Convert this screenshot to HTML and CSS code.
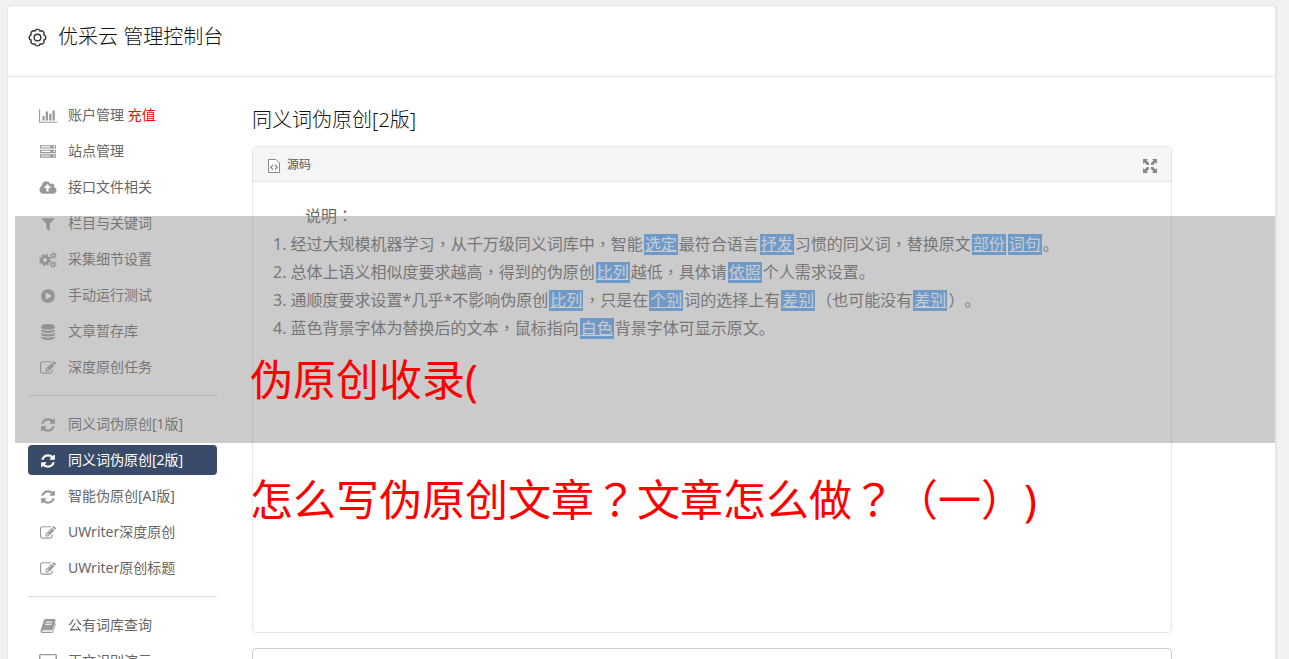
FILE: index.html
```
<!DOCTYPE html>
<html>
<head>
  <meta charset="UTF-8">
  <meta name="viewport" content="width=device-width, initial-scale=1.0">
  <title>优采云 管理控制台</title>
  <link rel="stylesheet" href="styles.css">
</head>
<body>
  <!-- 图标 -->
  <svg class="sprite" aria-hidden="true">
    <symbol id="i-chart" viewBox="0 0 2048 1792"><path d="M640 896v512h-256v-512h256zm384-512v1024h-256v-1024h256zm1024 1152v128h-2048v-1536h128v1408h1920zm-640-896v768h-256v-768h256zm384-384v1152h-256v-1152h256z"/></symbol>
    <symbol id="i-server" viewBox="0 0 1792 1792"><path d="M128 1408h1024v-128h-1024v128zm0-512h1024v-128h-1024v128zm1568 448q0-40-28-68t-68-28-68 28-28 68 28 68 68 28 68-28 28-68zm-1568-960h1024v-128h-1024v128zm1568 448q0-40-28-68t-68-28-68 28-28 68 28 68 68 28 68-28 28-68zm0-512q0-40-28-68t-68-28-68 28-28 68 28 68 68 28 68-28 28-68zm96 832v384h-1792v-384h1792zm0-512v384h-1792v-384h1792zm0-512v384h-1792v-384h1792z"/></symbol>
    <symbol id="i-cloud" viewBox="-64 0 1920 1792"><path d="M1216 864q0-14-9-23l-352-352q-9-9-23-9t-23 9l-351 351q-10 12-10 24 0 14 9 23t23 9h224v352q0 13 9.500 22.500t22.500 9.500h192q13 0 22.500-9.500t9.500-22.500v-352h224q13 0 22.500-9.500t9.500-22.500zm640 288q0 159-112.500 271.500t-271.500 112.500h-1088q-185 0-316.500-131.500t-131.500-316.500q0-130 70-240t188-165q-2-30-2-43 0-212 150-362t362-150q156 0 285.500 87t188.500 231q71-62 166-62 106 0 181 75t75 181q0 76-41 138 130 31 213.500 135.500t83.500 238.500z"/></symbol>
    <symbol id="i-filter" viewBox="0 0 1792 1792"><path d="M1595 295q17 41-14 70l-493 493v742q0 42-39 59-13 5-25 5-27 0-45-19l-256-256q-19-19-19-45v-486l-493-493q-31-29-14-70 17-39 59-39h1280q42 0 59 39z"/></symbol>
    <symbol id="i-cogs" viewBox="0 0 18 16">
      <g fill="none" stroke="currentColor">
        <circle cx="6" cy="8" r="3.400" stroke-width="2.600"/>
        <circle cx="6" cy="8" r="5.100" stroke-width="1.800" stroke-dasharray="2.200 1.805"/>
        <circle cx="14.200" cy="3.600" r="1.700" stroke-width="1.300"/>
        <circle cx="14.200" cy="3.600" r="2.700" stroke-width="1.100" stroke-dasharray="1.500 1.327"/>
        <circle cx="14.200" cy="12.400" r="1.700" stroke-width="1.300"/>
        <circle cx="14.200" cy="12.400" r="2.700" stroke-width="1.100" stroke-dasharray="1.500 1.327"/>
      </g>
    </symbol>
    <symbol id="i-play" viewBox="0 0 1792 1792"><path d="M896 128q209 0 385.500 103t279.500 279.500 103 385.500-103 385.500-279.500 279.500-385.500 103-385.500-103-279.500-279.500-103-385.500 103-385.500 279.500-279.500 385.500-103zm384 823q32-18 32-55t-32-55l-544-320q-31-19-64-1-32 19-32 56v640q0 37 32 56 16 8 32 8 17 0 32-9z"/></symbol>
    <symbol id="i-database" viewBox="0 0 1792 1792"><path d="M896 768q237 0 443-43t325-127v170q0 69-103 128t-280 93.500-385 34.500-385-34.500-280-93.500-103-128v-170q119 84 325 127t443 43zm0 768q237 0 443-43t325-127v170q0 69-103 128t-280 93.500-385 34.500-385-34.500-280-93.500-103-128v-170q119 84 325 127t443 43zm0-384q237 0 443-43t325-127v170q0 69-103 128t-280 93.500-385 34.500-385-34.500-280-93.500-103-128v-170q119 84 325 127t443 43zm0-1152q208 0 385 34.500t280 93.500 103 128v128q0 69-103 128t-280 93.500-385 34.500-385-34.500-280-93.500-103-128v-128q0-69 103-128t280-93.500 385-34.500z"/></symbol>
    <symbol id="i-edit" viewBox="0 0 1792 1792"><path d="M888 1184l116-116-152-152-116 116v56h96v96h56zm440-720q-16-16-33 1l-350 350q-17 17-1 33t33-1l350-350q17-17 1-33zm80 594v190q0 119-84.500 203.500t-203.500 84.500h-832q-119 0-203.500-84.500t-84.500-203.500v-832q0-119 84.500-203.500t203.500-84.500h832q63 0 117 25 15 7 18 23 3 17-9 29l-49 49q-14 14-32 8-23-6-45-6h-832q-66 0-113 47t-47 113v832q0 66 47 113t113 47h832q66 0 113-47t47-113v-126q0-13 9-22l64-64q15-15 35-7t20 29zm-96-738l288 288-672 672h-288v-288zm444 132l-92 92-288-288 92-92q28-28 68-28t68 28l152 152q28 28 28 68t-28 68z"/></symbol>
    <symbol id="i-refresh" viewBox="0 0 1792 1792"><path d="M1639 1056q0 5-1 7-64 268-268 434.500t-478 166.500q-146 0-282.500-55t-243.500-157l-129 129q-19 19-45 19t-45-19-19-45v-448q0-26 19-45t45-19h448q26 0 45 19t19 45-19 45l-137 137q71 66 161 102t187 36q134 0 250-65t186-179q11-17 53-117 8-23 30-23h192q13 0 22.500 9.500t9.500 22.500zm25-800v448q0 26-19 45t-45 19h-448q-26 0-45-19t-19-45 19-45l138-138q-148-137-349-137-134 0-250 65t-186 179q-11 17-53 117-8 23-30 23h-199q-13 0-22.500-9.500t-9.500-22.500v-7q65-268 270-434.500t480-166.500q146 0 284 55.500t245 156.500l130-129q19-19 45-19t45 19 19 45z"/></symbol>
    <symbol id="i-book" viewBox="0 0 16 16"><path fill-rule="evenodd" d="M5.500 1h9q1.300.2 1 1.500l-2.600 8.700q-.3 1-1.300 1H3q-.8 0-1 .7.100.8 1 .8h8.800q.7 0 1-.8L15.300 5q.8.500.5 1.400l-2.500 7.300q-.4 1.300-1.600 1.300H2.600Q.6 14.800.5 13q0-.8.3-1.500L3.900 2.200Q4.300 1 5.500 1zM6 3.500l-.3 1h6.500l.3-1zm-.7 2.200-.3 1h6.500l.3-1z"/></symbol>
    <symbol id="i-desktop" viewBox="0 0 18 16"><path fill-rule="evenodd" d="M1.500 0h15Q18 0 18 1.500v10q0 1.500-1.500 1.500H11l.6 2H13v1H5v-1h1.400L7 13H1.500Q0 13 0 11.500v-10Q0 0 1.500 0zm0 1.300v8.700h15V1.300z"/></symbol>
    <symbol id="i-gear" viewBox="0 0 20 20">
      <g fill="none" stroke="currentColor" stroke-width="1.500">
        <path d="M3.300 7.200A2.900 2.900 0 0 1 7.200 3.300A2.900 2.900 0 0 1 12.800 3.300A2.900 2.900 0 0 1 16.700 7.200A2.900 2.900 0 0 1 16.700 12.800A2.900 2.900 0 0 1 12.800 16.700A2.900 2.900 0 0 1 7.200 16.700A2.900 2.900 0 0 1 3.300 12.800A2.900 2.900 0 0 1 3.300 7.200z"/>
        <circle cx="10" cy="10" r="3.500"/>
      </g>
    </symbol>
    <symbol id="i-source" viewBox="0 0 12 14">
      <path fill="#fff" stroke="currentColor" d="M.5.500h7.500l3.500 3.500v9.500H.5z"/>
      <path fill="none" stroke="currentColor" stroke-width="1.300" d="M5 6 2.800 8.300 5 10.600M7 6l2.200 2.300L7 10.600"/>
    </symbol>
    <symbol id="i-expand" viewBox="0 0 14 14"><path d="M0 0h5L3.600 1.400 6 3.900v2H4L1.400 3.500 0 5zM14 0H9l1.400 1.400L8 3.900v2h2l2.600-2.400L14 5zM0 14h5l-1.400-1.400L6 10.100v-2H4l-2.600 2.400L0 9zM14 14H9l1.400-1.400L8 10.100v-2h2l2.600 2.400L14 9z"/></symbol>
  </svg>

  <div class="console">
    <header class="console-header">
      <svg class="gear"><use href="#i-gear"/></svg>
      <h1>优采云 管理控制台</h1>
    </header>

    <div class="console-body">
      <nav class="sidebar">
        <a href="#"><svg><use href="#i-chart"/></svg><span>账户管理 <span class="recharge">充值</span></span></a>
        <a href="#"><svg><use href="#i-server"/></svg>站点管理</a>
        <a href="#"><svg><use href="#i-cloud"/></svg>接口文件相关</a>
        <a href="#"><svg><use href="#i-filter"/></svg>栏目与关键词</a>
        <a href="#"><svg><use href="#i-cogs"/></svg>采集细节设置</a>
        <a href="#"><svg><use href="#i-play"/></svg>手动运行测试</a>
        <a href="#"><svg><use href="#i-database"/></svg>文章暂存库</a>
        <a href="#"><svg><use href="#i-edit"/></svg>深度原创任务</a>
        <hr>
        <a href="#"><svg><use href="#i-refresh"/></svg>同义词伪原创[1版]</a>
        <a href="#" class="active"><svg><use href="#i-refresh"/></svg>同义词伪原创[2版]</a>
        <a href="#"><svg><use href="#i-refresh"/></svg>智能伪原创[AI版]</a>
        <a href="#"><svg><use href="#i-edit"/></svg>UWriter深度原创</a>
        <a href="#"><svg><use href="#i-edit"/></svg>UWriter原创标题</a>
        <hr>
        <a href="#"><svg><use href="#i-book"/></svg>公有词库查询</a>
        <a href="#"><svg><use href="#i-desktop"/></svg>正文识别演示</a>
      </nav>

      <main class="content">
        <h2>同义词伪原创[2版]</h2>
        <div class="editor">
          <div class="toolbar">
            <button type="button" class="source-btn"><svg><use href="#i-source"/></svg>源码</button>
            <button type="button" class="expand-btn" aria-label="全屏"><svg><use href="#i-expand"/></svg></button>
          </div>
          <div class="editor-text">
            <p>说明<span class="mid">：</span></p>
            <ol>
              <li>经过大规模机器学习<span class="mid">，</span>从千万级同义词库中<span class="mid">，</span>智能<mark>选定</mark>最符合语言<mark>抒发</mark>习惯的同义词<span class="mid">，</span>替换原文<mark>部份</mark><mark>词句</mark>。</li>
              <li>总体上语义相似度要求越高<span class="mid">，</span>得到的伪原创<mark>比列</mark>越低<span class="mid">，</span>具体请<mark>依照</mark>个人需求设置。</li>
              <li>通顺度要求设置*几乎*不影响伪原创<mark>比列</mark><span class="mid">，</span>只是在<mark>个别</mark>词的选择上有<mark>差别</mark>（也可能没有<mark>差别</mark>）。</li>
              <li>蓝色背景字体为替换后的文本<span class="mid">，</span>鼠标指向<mark>白色</mark>背景字体可显示原文。</li>
            </ol>
          </div>
        </div>
        <textarea class="result" aria-label="结果"></textarea>
      </main>
    </div>
  </div>

  <!-- 覆盖在页面上的标题 -->
  <div class="shade"></div>
  <div class="caption">伪原创收录(<br>怎么写伪原创文章<span class="mid">？</span>文章怎么做<span class="mid">？</span>（一）)</div>
</body>
</html>
```

FILE: styles.css
```
* {
  margin: 0;
  padding: 0;
  box-sizing: border-box;
}

body {
  position: relative;
  padding: 5px 12px 0 7px;
  height: 100vh;
  overflow: hidden;
  font-family: "Noto Sans", "Noto Sans CJK SC", sans-serif;
  font-size: 14px;
  color: #666;
  background-color: #f1f1f1;
  text-spacing-trim: space-all;
}

svg {
  fill: currentColor;
  flex: none;
}

.sprite {
  position: absolute;
  width: 0;
  height: 0;
}

/* 居中的全角标点 */
.mid {
  font-family: "Noto Sans CJK TC", sans-serif;
  line-height: 1;
}

.console {
  background: #fff;
  border: 1px solid #e5e5e5;
  border-right-width: 2px;
  border-radius: 4px;
}

.console-header {
  display: flex;
  align-items: center;
  gap: 11px;
  height: 71px;
  padding: 0 20px 8px;
  border-bottom: 1px solid #e5e5e5;
  color: #333;
}

.gear {
  width: 19px;
  height: 19px;
}

h1,
h2 {
  font-size: 20px;
  line-height: 28px;
  font-weight: 300;
  color: #111;
}

.console-body {
  display: flex;
  gap: 35px;
  padding: 23px 103px 0 20px;
}

/* 左侧菜单 */
.sidebar {
  flex: none;
  width: 189px;
  display: flex;
  flex-direction: column;
  gap: 6px;
}

.sidebar a {
  display: flex;
  align-items: center;
  gap: 11px;
  height: 30px;
  padding: 0 0 2px 11px;
  border-radius: 4px;
  color: #666;
  text-decoration: none;
}

.sidebar svg {
  width: 18px;
  height: 16px;
  margin-top: 3px;
  color: #999;
}

.sidebar .active,
.sidebar .active svg {
  color: #fff;
}

.sidebar .active {
  background: #394b68;
}

.sidebar hr {
  margin: 7px 0;
  border: 0;
  border-top: 1px solid #ddd;
}

.sidebar .recharge {
  color: #f00;
}

/* 编辑器 */
.content {
  flex: 1;
  min-width: 0;
  padding-top: 6px;
}

.editor {
  min-height: 487px;
  margin: 12px 0 15px;
  border: 1px solid #e5e5e5;
  border-radius: 4px;
}

.toolbar {
  display: flex;
  align-items: center;
  justify-content: space-between;
  height: 35px;
  padding: 0 14px 0 15px;
  background: #f5f5f5;
  border-bottom: 1px solid #e5e5e5;
}

.toolbar button {
  display: flex;
  align-items: center;
  gap: 7px;
  border: 0;
  background: none;
  font-family: inherit;
  font-size: 12px;
  color: #555;
}

.toolbar svg {
  width: 14px;
  height: 14px;
  margin-top: 3px;
  color: #888;
}

.toolbar .source-btn svg {
  width: 12px;
}

.editor-text {
  padding: 20px;
  font-size: 16px;
  line-height: 28px;
}

.editor-text p {
  text-indent: 2em;
}

.editor-text ol {
  list-style-position: inside;
}

.editor-text mark {
  margin: 0 1px;
  padding: 0 1px;
  background: linear-gradient(#55a7ff, #55a7ff) center / 100% 21px no-repeat;
  color: #fff;
  text-decoration: underline;
}

.result {
  display: block;
  width: 100%;
  height: 120px;
  border: 1px solid #ccc;
  border-radius: 4px;
  resize: none;
}

/* 遮罩和标题 */
.shade {
  position: absolute;
  top: 216px;
  left: 15px;
  right: 14px;
  height: 227px;
  background: rgba(140, 140, 140, 0.45);
}

.caption {
  position: absolute;
  top: 320px;
  left: 250px;
  font-size: 43px;
  line-height: 120px;
  color: #f00;
  white-space: nowrap;
}
```
